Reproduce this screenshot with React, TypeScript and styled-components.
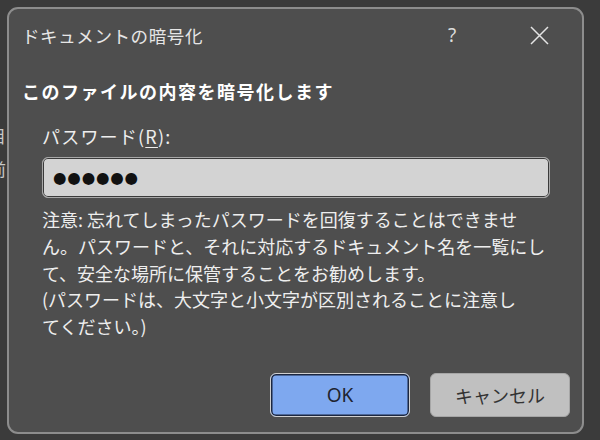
import React from "react";
import styled, { createGlobalStyle } from "styled-components";

const Global = createGlobalStyle`
  html, body { margin: 0; padding: 0; background: #3b3b3b; }
  body { font-family: "Noto Sans CJK JP", "Noto Sans", sans-serif; }
  * { box-sizing: border-box; }
`;

const Page = styled.div`
  position: relative;
  width: 600px;
  height: 440px;
  padding: 7px 0 0 7px;
  background: #3b3b3b;
  overflow: hidden;
  display: flex;
  align-items: flex-start;
`;

const BehindText = styled.div`
  position: absolute;
  left: -11px;
  top: 119px;
  font-size: 17px;
  line-height: 33px;
  color: #c8c8c8;
  white-space: pre;
`;

const Dialog = styled.div`
  position: relative;
  width: 577px;
  height: 427px;
  border: 2px solid #8d8d8d;
  border-radius: 11px;
  background: #4e4e4e;
  display: flex;
  flex-direction: column;
  color: #f2f2f2;
`;

const TitleBar = styled.div`
  height: 52px;
  display: flex;
  align-items: center;
  padding: 0 33px 0 13px;
`;

const Title = styled.div`
  flex: 1;
  font-size: 17.5px;
  color: #e6e6e6;
  letter-spacing: 0.6px;
`;

const HelpButton = styled.div`
  font-size: 19px;
  color: #dcdcdc;
  width: 20px;
  text-align: center;
  margin-right: 68px;
  font-family: "Noto Sans", sans-serif;
`;

const CloseIcon = styled.svg`
  width: 19px;
  height: 19px;
  display: block;
`;

const Heading = styled.div`
  margin: 17px 0 0 13px;
  font-size: 18px;
  font-weight: 700;
  line-height: 26px;
  letter-spacing: 1.5px;
  color: #ffffff;
`;

const Body = styled.div`
  padding: 0 0 0 33px;
  display: flex;
  flex-direction: column;
`;

const Label = styled.div`
  margin-top: 19px;
  font-size: 18px;
  line-height: 26px;
  color: #eeeeee;
  letter-spacing: 1.2px;
`;

const Underline = styled.span`
  text-decoration: underline;
  text-underline-offset: 3px;
`;

const PasswordBox = styled.div`
  margin-top: 8px;
  width: 508px;
  height: 41px;
  border: 1px solid #a8a8a8;
  box-shadow: inset 0 0 0 1px #3a3a3a;
  border-radius: 6px;
  background: #d3d3d3;
  display: flex;
  align-items: center;
  padding-left: 10px;
`;

const Dots = styled.span`
  font-family: "DejaVu Sans", sans-serif;
  font-size: 15.5px;
  letter-spacing: 0.8px;
  color: #111111;
  line-height: 1;
  padding-top: 2px;
`;

const Note = styled.div`
  margin-top: 8px;
  font-size: 18px;
  line-height: 26.75px;
  color: #eeeeee;
  white-space: pre;
`;

const Buttons = styled.div`
  margin-top: auto;
  padding: 0 12px 15px 0;
  display: flex;
  justify-content: flex-end;
  gap: 20px;
`;

const Button = styled.div<{ $primary?: boolean }>`
  width: 140px;
  height: 44px;
  border-radius: 6px;
  display: flex;
  align-items: center;
  justify-content: center;
  font-size: 19px;
  color: ${(p) => (p.$primary ? "#1e2430" : "#333333")};
  background: ${(p) => (p.$primary ? "#7ea8ef" : "#c0c0c0")};
  border: 1px solid ${(p) => (p.$primary ? "#cfcfcf" : "#a6a6a6")};
  box-shadow: ${(p) => (p.$primary ? "inset 0 0 0 1.5px #1c2740" : "none")};
  font-family: "Noto Sans", "Noto Sans CJK JP", sans-serif;
`;

const CancelLabel = styled.span`
  font-family: "Noto Sans CJK JP", sans-serif;
  font-size: 18px;
`;

export default function App() {
  return (
    <>
      <Global />
      <Page>
        <BehindText>{"目\n前"}</BehindText>
        <Dialog>
          <TitleBar>
            <Title>ドキュメントの暗号化</Title>
            <HelpButton>?</HelpButton>
            <CloseIcon viewBox="0 0 19 19">
              <path d="M1 1 L18 18 M18 1 L1 18" stroke="#e4e4e4" strokeWidth="1.5" fill="none" />
            </CloseIcon>
          </TitleBar>
          <Heading>このファイルの内容を暗号化します</Heading>
          <Body>
            <Label>
              パスワード(<Underline>R</Underline>):
            </Label>
            <PasswordBox>
              <Dots>●●●●●●</Dots>
            </PasswordBox>
            <Note>
              {"注意: 忘れてしまったパスワードを回復することはできませ\nん。パスワードと、それに対応するドキュメント名を一覧にし\nて、安全な場所に保管することをお勧めします。\n(パスワードは、大文字と小文字が区別されることに注意し\nてください。)"}
            </Note>
          </Body>
          <Buttons>
            <Button $primary>OK</Button>
            <Button>
              <CancelLabel>キャンセル</CancelLabel>
            </Button>
          </Buttons>
        </Dialog>
      </Page>
    </>
  );
}
